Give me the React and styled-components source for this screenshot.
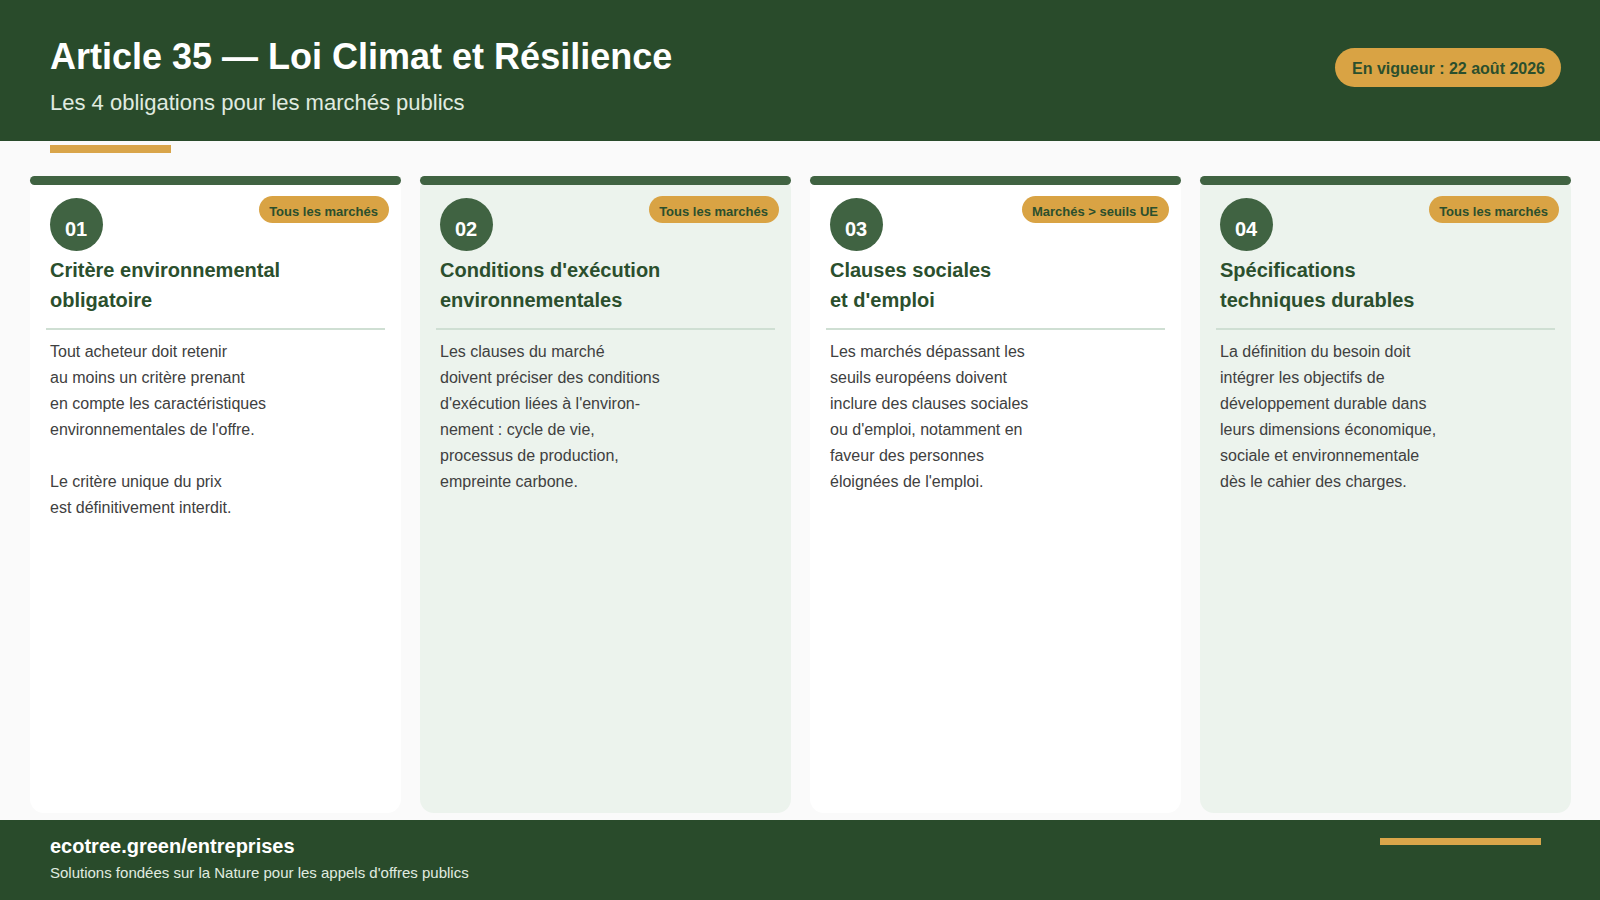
import React from 'react';
import styled, { createGlobalStyle } from 'styled-components';

const Global = createGlobalStyle`
  html, body { margin: 0; padding: 0; }
  body { width: 1600px; height: 900px; overflow: hidden; background: #fafafa; font-family: "Liberation Sans", Arial, sans-serif; }
  * { box-sizing: border-box; }
`;
const Page = styled.div`display: flex; flex-direction: column; width: 1600px; height: 900px; background: #fafafa;`;
const Header = styled.header`
  height: 141px; flex: none; background: #294b2b; display: flex; justify-content: space-between;
  padding: 0 39px 0 50px;
`;
const HeaderText = styled.div`padding-top: 35px;`;
const Title = styled.h1`margin: 0; font-size: 36px; line-height: 44px; font-weight: 700; color: #fff;`;
const Subtitle = styled.p`margin: 10px 0 0; font-size: 22px; line-height: 27px; color: #e0ebe0;`;
const Pill = styled.div`
  margin-top: 48px; height: 39px; padding: 0 16px 0 17px; border-radius: 20px; background: #d9a344;
  color: #2b4f2d; font-weight: 700; font-size: 16px; line-height: 41px;
`;
const AccentBar = styled.div`width: 121px; height: 8px; margin: 4px 0 0 50px; background: #d9a54a; flex: none;`;
const Cards = styled.main`
  flex: 1; min-height: 0; display: grid; grid-template-columns: repeat(4, 371px); gap: 19px;
  padding: 23px 0 7px 30px;
`;
const Card = styled.article`
  position: relative; border-radius: 14px; background: ${p => (p.$tint ? '#ecf3ed' : '#fff')};
  padding: 0 0 0 20px; display: flex; flex-direction: column;
`;
const TopBar = styled.div`height: 9px; margin-left: -20px; border-radius: 4.5px; background: #406342; flex: none;`;
const Number = styled.div`
  margin-top: 13px; width: 53px; height: 53px; flex: none; border-radius: 50%; background: #406342;
  color: #fff; font-weight: 700; font-size: 20px; line-height: 23px; text-align: center; padding: 20px 1px 0 0;
`;
const Tag = styled.span`
  position: absolute; top: 20px; right: 12px; height: 27px; padding: 0 11px 0 10px; border-radius: 14px;
  background: #d9a344; color: #2b4f2d; font-weight: 700; font-size: 13px; line-height: 32px; white-space: nowrap;
`;
const CardTitle = styled.h2`margin: 4px 0 0; font-size: 20px; line-height: 30px; font-weight: 700; color: #2b4f2d; white-space: pre-line;`;
const Divider = styled.hr`margin: 13px 16px 0 -4px; height: 2px; border: 0; background: #cfdfd3; flex: none;`;
const Body = styled.p`margin: 9px 0 0; font-size: 16px; line-height: 26px; color: #404040; white-space: pre-line;`;
const Footer = styled.footer`
  height: 80px; flex: none; background: #294b2b; display: flex; justify-content: space-between; padding: 0 59px 0 50px;
`;
const FooterText = styled.div`padding-top: 14px;`;
const FooterLink = styled.div`font-size: 20px; line-height: 25px; font-weight: 700; color: #fff;`;
const FooterNote = styled.div`margin-top: 3px; font-size: 15px; line-height: 22px; color: #e0ebe0;`;
const FooterBar = styled.div`width: 161px; height: 7px; margin-top: 18px; background: #d9a54a;`;

const data = [
  { n: '01', tag: 'Tous les marchés', title: 'Critère environnemental\nobligatoire', body: "Tout acheteur doit retenir\nau moins un critère prenant\nen compte les caractéristiques\nenvironnementales de l'offre.\n\nLe critère unique du prix\nest définitivement interdit." },
  { n: '02', tag: 'Tous les marchés', tint: true, title: "Conditions d'exécution\nenvironnementales", body: "Les clauses du marché\ndoivent préciser des conditions\nd'exécution liées à l'environ-\nnement : cycle de vie,\nprocessus de production,\nempreinte carbone." },
  { n: '03', tag: 'Marchés > seuils UE', title: "Clauses sociales\net d'emploi", body: "Les marchés dépassant les\nseuils européens doivent\ninclure des clauses sociales\nou d'emploi, notamment en\nfaveur des personnes\néloignées de l'emploi." },
  { n: '04', tag: 'Tous les marchés', tint: true, title: 'Spécifications\ntechniques durables', body: "La définition du besoin doit\nintégrer les objectifs de\ndéveloppement durable dans\nleurs dimensions économique,\nsociale et environnementale\ndès le cahier des charges." },
];

export default function App() {
  return (
    <Page>
      <Global />
      <Header>
        <HeaderText>
          <Title>Article 35 — Loi Climat et Résilience</Title>
          <Subtitle>Les 4 obligations pour les marchés publics</Subtitle>
        </HeaderText>
        <Pill>En vigueur : 22 août 2026</Pill>
      </Header>
      <AccentBar />
      <Cards>
        {data.map(c => (
          <Card key={c.n} $tint={c.tint}>
            <TopBar />
            <Tag>{c.tag}</Tag>
            <Number>{c.n}</Number>
            <CardTitle>{c.title}</CardTitle>
            <Divider />
            <Body>{c.body}</Body>
          </Card>
        ))}
      </Cards>
      <Footer>
        <FooterText>
          <FooterLink>ecotree.green/entreprises</FooterLink>
          <FooterNote>Solutions fondées sur la Nature pour les appels d'offres publics</FooterNote>
        </FooterText>
        <FooterBar />
      </Footer>
    </Page>
  );
}
